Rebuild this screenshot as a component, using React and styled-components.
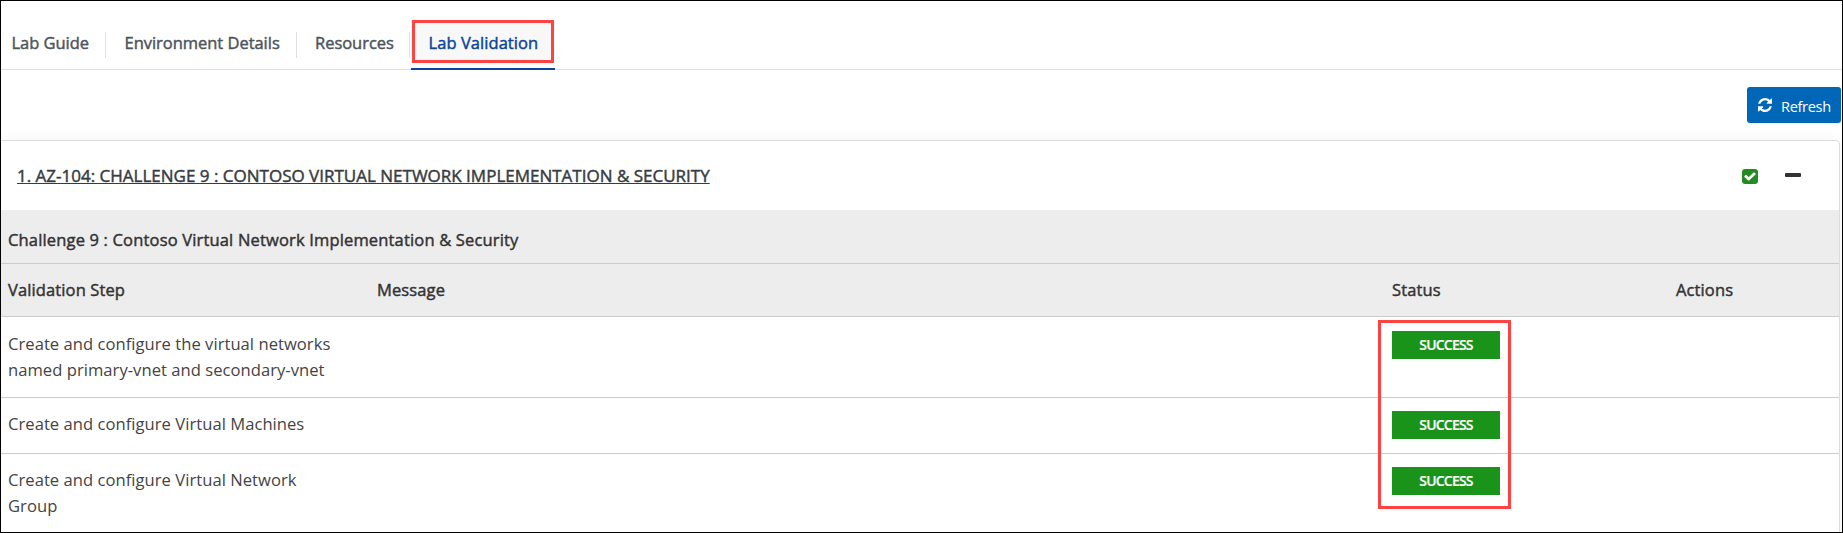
import React from 'react';
import styled, { createGlobalStyle, css } from 'styled-components';

const GlobalStyle = createGlobalStyle`
  *, *::before, *::after { box-sizing: border-box; }
  body {
    margin: 0;
    background: #fff;
    font-family: 'Open Sans', 'Noto Sans', sans-serif;
    font-size: 16.5px;
    line-height: 26px;
  }
`;

const medium = css`
  font-weight: 400;
  -webkit-text-stroke: 0.45px currentColor;
`;

const Frame = styled.main`
  height: 533px;
  display: flex;
  flex-direction: column;
  border: 1px solid #000;
  background: #fff;
  overflow: hidden;
`;

const TabBar = styled.nav`
  display: flex;
  flex: none;
  align-items: flex-end;
  height: 69px;
  border-bottom: 1px solid #dedfe0;
`;

const Tab = styled.a`
  ${medium}
  position: relative;
  flex: none;
  width: ${(p) => p.$width}px;
  height: 52px;
  padding: 12px 0 0 ${(p) => p.$inset}px;
  margin-bottom: -1px;
  color: ${(p) => (p.$active ? '#0a459b' : '#4d555c')};
  border-bottom: 2px solid ${(p) => (p.$active ? '#0a459b' : 'transparent')};
  letter-spacing: ${(p) => (p.$active ? 0.06 : -0.03)}px;
  white-space: nowrap;
`;

const Divider = styled.span`
  flex: none;
  width: 1px;
  height: 26px;
  margin: 0 ${(p) => p.$after || 0}px 11px 0;
  background: #dedfe0;
`;

const TabHighlight = styled.span`
  position: absolute;
  z-index: 0;
  inset: 2px 1px 5px 1px;
  border: 3px solid #ff4343;
  background: #f8f8f8;
`;

const TabLabel = styled.span`
  position: relative;
  z-index: 1;
`;

const Toolbar = styled.div`
  display: flex;
  flex: none;
  justify-content: flex-end;
  height: 70px;
  padding: 17px 0 0;
`;

const RefreshButton = styled.button`
  display: flex;
  align-items: center;
  gap: 9px;
  width: 94px;
  height: 36px;
  margin-right: 1px;
  padding: 0 0 0 11px;
  border: 0;
  border-radius: 3px;
  background: #0067b8;
  color: #fff;
  font: 400 14.6px/26px 'Open Sans', 'Noto Sans', sans-serif;
  letter-spacing: -0.35px;

  svg { margin-top: -1px; }
  span { padding-top: 2px; }
`;

const Card = styled.section`
  flex: none;
  height: 420px;
  margin: 0 2px 0 -1px;
  border: 1px solid #dcdcdc;
  border-radius: 0 4px 0 0;
  background: #fff;
  box-shadow: 0 0 15px rgba(0, 0, 0, 0.05);
`;

const CardHeader = styled.header`
  display: flex;
  height: 69px;
  padding: 22px 38px 0 16px;
`;

const CardTitle = styled.h2`
  ${medium}
  flex: 1;
  margin: 0;
  color: #363c42;
  font-size: 17px;
  line-height: 26px;
  text-decoration: underline;
  text-decoration-thickness: 1px;
  text-decoration-skip-ink: none;
  text-underline-offset: 1px;
`;

const PassedIcon = styled.span`
  display: flex;
  width: 16px;
  margin-top: 6px;
`;

const CollapseMark = styled.span`
  width: 16px;
  height: 4px;
  margin: 10px 0 0 27px;
  border-radius: 1px;
  background: #333;
`;

const SectionTitle = styled.h3`
  ${medium}
  height: 54px;
  margin: 0;
  padding: 17px 0 0 7px;
  border-bottom: 1px solid #ccc;
  background: #ededed;
  color: #333;
  font-size: 16.5px;
  letter-spacing: 0.165px;
`;

const Columns = styled.div`
  display: grid;
  grid-template-columns: 369px 1015px 284px 1fr;
  padding-left: 7px;
`;

const HeadRow = styled(Columns)`
  ${medium}
  height: 53px;
  padding-top: 13px;
  border-bottom: 1px solid #ccc;
  background: #ededed;
  color: #333;
  letter-spacing: 0.12px;
`;

const StepRow = styled(Columns)`
  align-items: start;
  height: ${(p) => p.$height}px;
  padding-top: ${(p) => p.$top}px;
  border-bottom: 1px solid #ccc;
  color: #444;
`;

const StepName = styled.div`
  width: 340px;
  font-size: 16.6px;
  letter-spacing: 0.03px;
`;

const Badge = styled.span`
  width: 108px;
  height: 28px;
  background: #1a931a;
  color: #fff;
  font-size: 14px;
  font-weight: 600;
  line-height: 27px;
  letter-spacing: -0.8px;
  text-align: center;
  -webkit-text-stroke: 0.2px currentColor;
`;

const Steps = styled.div`
  position: relative;
`;

const StatusHighlight = styled.div`
  position: absolute;
  top: 3px;
  left: 1377px;
  width: 133px;
  height: 189px;
  border: 3px solid #ff4343;
`;

const steps = [
  { lines: ['Create and configure the virtual networks', 'named primary-vnet and secondary-vnet'], height: 81, top: 14 },
  { lines: ['Create and configure Virtual Machines'], height: 56, top: 13 },
  { lines: ['Create and configure Virtual Network', 'Group'], height: 81, top: 13 },
];

const RefreshIcon = () => (
  <svg width="14" height="14" viewBox="0 0 1536 1536" fill="currentColor" aria-hidden="true">
    <path d="M1511 928q0 5-1 7-64 268-268 434.5t-478 166.5q-146 0-282.5-55t-243.5-157l-129 129q-19 19-45 19t-45-19-19-45v-448q0-26 19-45t45-19h448q26 0 45 19t19 45-19 45l-137 137q71 66 161 102t187 36q134 0 250-65t186-179q11-17 53-117 8-23 30-23h192q13 0 22.5 9.5t9.5 22.5zm25-800v448q0 26-19 45t-45 19h-448q-26 0-45-19t-19-45 19-45l138-138q-148-137-349-137-134 0-250 65t-186 179q-11 17-53 117-8 23-30 23h-199q-13 0-22.5-9.5t-9.5-22.5v-7q65-268 270-434.5t480-166.5q146 0 284 55.5t245 156.5l130-129q19-19 45-19t45 19 19 45z" />
  </svg>
);

const CheckIcon = () => (
  <svg width="16" height="15" viewBox="0 0 1536 1536" preserveAspectRatio="none" fill="#228b22" aria-hidden="true">
    <path d="M685 1171l614-614q19-19 19-45t-19-45l-102-102q-19-19-45-19t-45 19l-467 467-211-211q-19-19-45-19t-45 19l-102 102q-19 19-19 45t19 45l358 358q19 19 45 19t45-19zm851-883v960q0 119-84.5 203.5t-203.5 84.5h-960q-119 0-203.5-84.5t-84.5-203.5v-960q0-119 84.5-203.5t203.5-84.5h960q119 0 203.5 84.5t84.5 203.5z" />
  </svg>
);

export default function App() {
  return (
    <>
      <GlobalStyle />
      <Frame>
        <TabBar>
          <Tab $width={104} $inset={10.5}>Lab Guide</Tab>
          <Divider />
          <Tab $width={190} $inset={18.5}>Environment Details</Tab>
          <Divider />
          <Tab $width={112} $inset={18}>Resources</Tab>
          <Divider $after={1} />
          <Tab $width={144} $inset={17.5} $active>
            <TabHighlight />
            <TabLabel>Lab Validation</TabLabel>
          </Tab>
        </TabBar>
        <Toolbar>
          <RefreshButton>
            <RefreshIcon />
            <span>Refresh</span>
          </RefreshButton>
        </Toolbar>
        <Card>
          <CardHeader>
            <CardTitle>1. AZ-104: CHALLENGE 9 : CONTOSO VIRTUAL NETWORK IMPLEMENTATION &amp; SECURITY</CardTitle>
            <PassedIcon><CheckIcon /></PassedIcon>
            <CollapseMark />
          </CardHeader>
          <SectionTitle>Challenge 9 : Contoso Virtual Network Implementation &amp; Security</SectionTitle>
          <HeadRow>
            <span>Validation Step</span>
            <span>Message</span>
            <span>Status</span>
            <span>Actions</span>
          </HeadRow>
          <Steps>
            {steps.map((step) => (
              <StepRow key={step.lines[0]} $height={step.height} $top={step.top}>
                <StepName>
                  {step.lines.map((line) => <div key={line}>{line}</div>)}
                </StepName>
                <span />
                <Badge>SUCCESS</Badge>
              </StepRow>
            ))}
            <StatusHighlight />
          </Steps>
        </Card>
      </Frame>
    </>
  );
}
